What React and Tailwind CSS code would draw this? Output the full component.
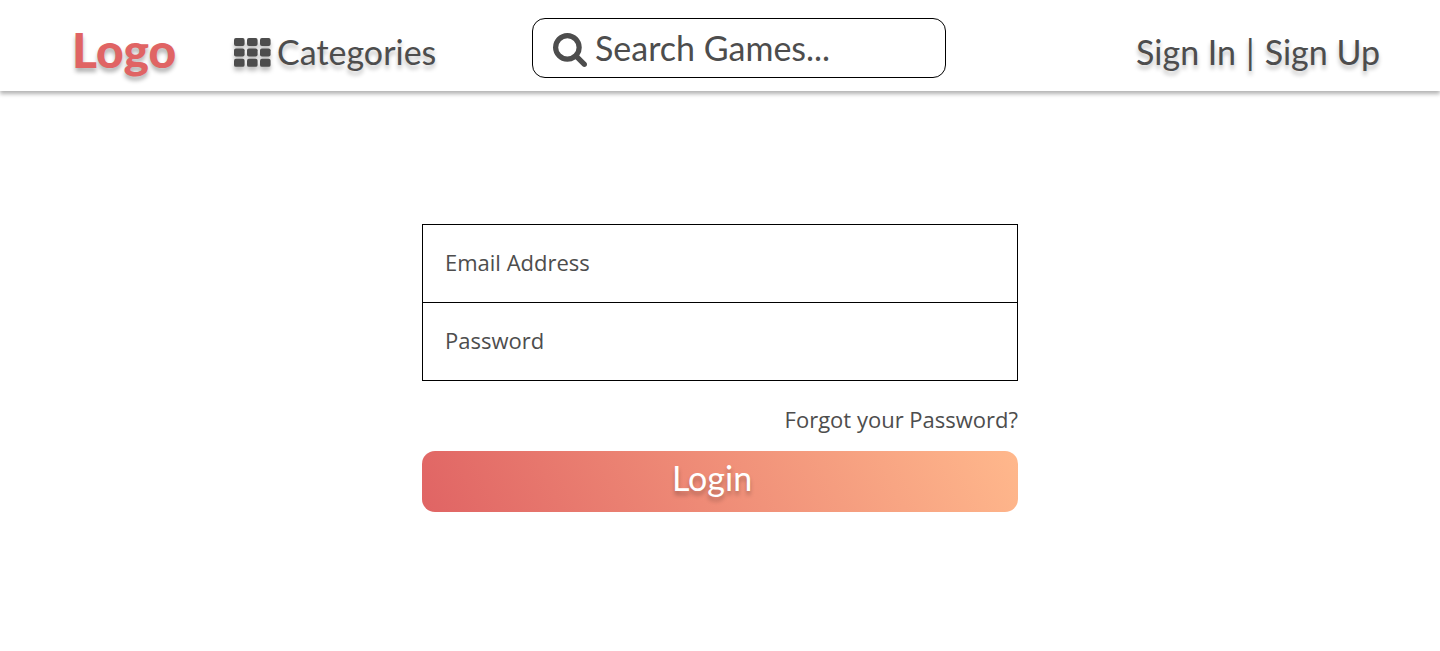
import React from "react";

function GridIcon() {
  return (
    <svg viewBox="0 0 37 29" className="h-[29px] w-[37px] drop-shadow-[0_4px_2px_rgba(0,0,0,0.25)]" fill="currentColor" aria-hidden="true">
      {[0, 10.4, 20.8].map((y) =>
        [0, 13, 26].map((x) => <rect key={`${x}-${y}`} x={x} y={y} width="10.6" height="8" rx="1.9" />)
      )}
    </svg>
  );
}

function SearchIcon() {
  return (
    <svg viewBox="64 128 1664 1664" className="size-[34px] shrink-0" fill="currentColor" aria-hidden="true">
      <path d="M1216 832q0-185-131.5-316.5t-316.5-131.5-316.5 131.5-131.5 316.5 131.5 316.5 316.5 131.5 316.5-131.5 131.5-316.5zm512 832q0 52-38 90t-90 38q-54 0-90-38l-343-342q-179 124-399 124-143 0-273.5-55.5t-225-150-150-225-55.5-273.5 55.5-273.5 150-225 225-150 273.5-55.5 273.5 55.5 225 150 150 225 55.5 273.5q0 220-124 399l343 343q37 37 37 90z" />
    </svg>
  );
}

function Header() {
  return (
    <header className="flex items-center bg-white pt-[18px] pr-[60px] pb-[13px] pl-[72px] font-['Lato',sans-serif] text-[34px] leading-[44px] shadow-[0_3px_4px_rgba(0,0,0,0.3)]">
      <a href="#home" className="w-[162px] shrink-0 pt-1 text-[48px] font-black text-[#e06464] text-shadow-[0_4px_4px_rgba(0,0,0,0.3)]">
        Logo
      </a>
      <nav className="w-[298px] shrink-0 pt-2">
        <a href="#categories" className="flex items-center gap-1.5 text-shadow-[0_4px_4px_rgba(0,0,0,0.25)]">
          <GridIcon />
          Categories
        </a>
      </nav>
      <form role="search" className="flex h-[60px] w-[414px] items-center gap-2 rounded-[13px] border border-black px-5">
        <label htmlFor="search" className="flex pt-1"><SearchIcon /></label>
        <input
          id="search"
          type="search"
          aria-label="Search Games"
          placeholder="Search Games..."
          className="w-full min-w-0 bg-transparent outline-none placeholder:text-[#4d4d4d] placeholder:opacity-100"
        />
      </form>
      <div className="ml-auto flex shrink-0 gap-2.5 pt-2 text-shadow-[0_4px_4px_rgba(0,0,0,0.25)]">
        <a href="#sign-in">Sign In</a>
        <span>|</span>
        <a href="#sign-up">Sign Up</a>
      </div>
    </header>
  );
}

function LoginForm() {
  const field = "block h-[78px] w-full border-b border-black px-[22px] pb-1 outline-none placeholder:text-[#4d4d4d] placeholder:opacity-100";
  return (
    <form className="mx-auto mt-[133px] flex w-full max-w-[596px] flex-col font-['Open_Sans',sans-serif] text-[22px] leading-8">
      <div className="border border-b-0 border-black">
        <input type="email" aria-label="Email Address" placeholder="Email Address" className={field} />
        <input type="password" aria-label="Password" placeholder="Password" className={field} />
      </div>
      <a href="#forgot" className="mt-[22px] self-end">Forgot your Password?</a>
      <button
        type="button"
        className="mt-4 h-[61px] rounded-[13px] bg-linear-[65deg] from-[#e06464] to-[#ffb88c] pr-4 pb-2 font-['Lato',sans-serif] text-[34px] leading-[44px] text-white text-shadow-[0_4px_4px_rgba(0,0,0,0.25)]"
      >
        Login
      </button>
    </form>
  );
}

export default function App() {
  return (
    <div className="min-h-screen bg-white pb-8 text-[#4d4d4d]">
      <Header />
      <main>
        <LoginForm />
      </main>
    </div>
  );
}
